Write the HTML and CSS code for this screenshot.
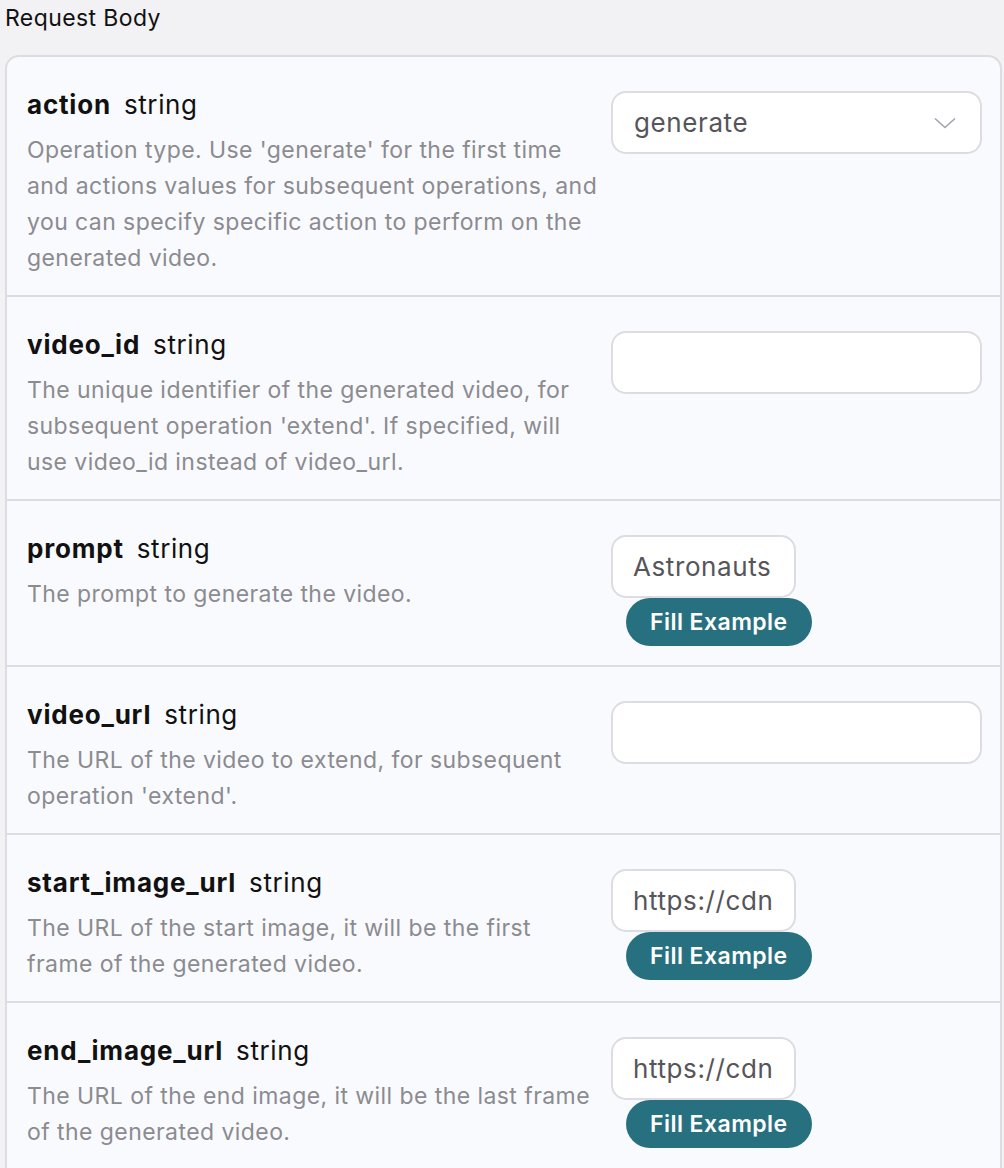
FILE: index.html
```html
<!DOCTYPE html>
<html lang="en">
<head>
  <meta charset="UTF-8" />
  <meta name="viewport" content="width=device-width, initial-scale=1.0"/>
  <title>Request Body</title>
  <link rel="stylesheet" href="styles.css">
</head>
<body>

  <h2 class="section-title">Request Body</h2>

  <div class="params">
    <div class="param">
      <div class="param-info">
        <div class="param-head"><span class="param-name">action</span><span class="param-type">string</span></div>
        <p class="param-desc">Operation type. Use 'generate' for the first time and actions values for subsequent operations, and you can specify specific action to perform on the generated video.</p>
      </div>
      <div class="param-field">
        <div class="select">
          <span>generate</span>
          <svg class="chevron" width="22" height="12" viewBox="0 0 22 12"><path d="M1 1.5 L11 10.5 L21 1.5" fill="none" stroke="#a3a3ad" stroke-width="1.6"/></svg>
        </div>
      </div>
    </div>

    <div class="param">
      <div class="param-info">
        <div class="param-head"><span class="param-name">video_id</span><span class="param-type">string</span></div>
        <p class="param-desc">The unique identifier of the generated video, for subsequent operation 'extend'. If specified, will use video_id instead of video_url.</p>
      </div>
      <div class="param-field">
        <input class="text-input" type="text">
      </div>
    </div>

    <div class="param">
      <div class="param-info">
        <div class="param-head"><span class="param-name">prompt</span><span class="param-type">string</span></div>
        <p class="param-desc">The prompt to generate the video.</p>
      </div>
      <div class="param-field">
        <input class="text-input short" type="text" value="Astronauts">
        <button class="fill-btn">Fill Example</button>
      </div>
    </div>

    <div class="param">
      <div class="param-info">
        <div class="param-head"><span class="param-name">video_url</span><span class="param-type">string</span></div>
        <p class="param-desc">The URL of the video to extend, for subsequent operation 'extend'.</p>
      </div>
      <div class="param-field">
        <input class="text-input" type="text">
      </div>
    </div>

    <div class="param">
      <div class="param-info">
        <div class="param-head"><span class="param-name">start_image_url</span><span class="param-type">string</span></div>
        <p class="param-desc">The URL of the start image, it will be the first frame of the generated video.</p>
      </div>
      <div class="param-field">
        <input class="text-input short" type="text" value="https://cdn.acedata.cloud/start.png">
        <button class="fill-btn">Fill Example</button>
      </div>
    </div>

    <div class="param">
      <div class="param-info">
        <div class="param-head"><span class="param-name">end_image_url</span><span class="param-type">string</span></div>
        <p class="param-desc">The URL of the end image, it will be the last frame of the generated video.</p>
      </div>
      <div class="param-field">
        <input class="text-input short" type="text" value="https://cdn.acedata.cloud/end.png">
        <button class="fill-btn">Fill Example</button>
      </div>
    </div>
  </div>

</body>
</html>
```

FILE: styles.css
```css
:root {
  --bg: #f2f2f4;
  --card: #f9fafe;
  --border: #dcdce2;
  --text: #111111;
  --muted: #8b8b90;
  --field-text: #55555a;
  --button: #27707f;
  --white: #ffffff;
}

body {
  margin: 0;
  font-family: Inter, 'Noto Sans', sans-serif;
  background-color: var(--bg);
  color: var(--text);
  height: 1168px;
  overflow: hidden;
}

.section-title {
  margin: 0;
  padding: 4px 5px 0;
  height: 50px;
  box-sizing: border-box;
  font-size: 23px;
  line-height: 28px;
  font-weight: 400;
  letter-spacing: 0.4px;
}

.params {
  margin: 5px 2px 0 5px;
  background-color: var(--card);
  border: 2px solid var(--border);
  border-bottom: none;
  border-radius: 14px 14px 0 0;
}

.param {
  display: flex;
  gap: 10px;
  padding: 33px 18px 19px 20px;
  border-bottom: 2px solid var(--border);
}

.param:last-child {
  border-bottom: none;
}

.param-info {
  flex: 1;
}

.param-head {
  display: flex;
  align-items: baseline;
  gap: 13px;
  font-size: 26px;
  line-height: 30px;
  letter-spacing: 0.6px;
  margin-bottom: 12px;
}

.param-name {
  font-weight: 700;
  letter-spacing: 0.8px;
}

.param-desc {
  margin: 0;
  color: var(--muted);
  font-size: 23px;
  line-height: 36px;
  letter-spacing: 0.43px;
}

.param-field {
  width: 371px;
  padding-top: 1px;
  display: flex;
  flex-direction: column;
  align-items: flex-start;
}

.select,
.text-input {
  width: 100%;
  height: 63px;
  box-sizing: border-box;
  background: var(--white);
  border: 2px solid var(--border);
  border-radius: 15px;
  font-family: inherit;
  font-size: 26px;
  letter-spacing: 0.6px;
  color: var(--field-text);
}

.select {
  display: flex;
  align-items: center;
  justify-content: space-between;
  padding: 0 24px 0 21px;
}

.text-input {
  padding: 0 20px;
  outline: none;
}

.text-input.short {
  width: 185px;
}

.fill-btn {
  margin-left: 15px;
  height: 48px;
  padding: 0 24px;
  background-color: var(--button);
  color: var(--white);
  border: none;
  border-radius: 24px;
  font-family: inherit;
  font-size: 23px;
  font-weight: 600;
  letter-spacing: 0.45px;
  cursor: pointer;
}
```
